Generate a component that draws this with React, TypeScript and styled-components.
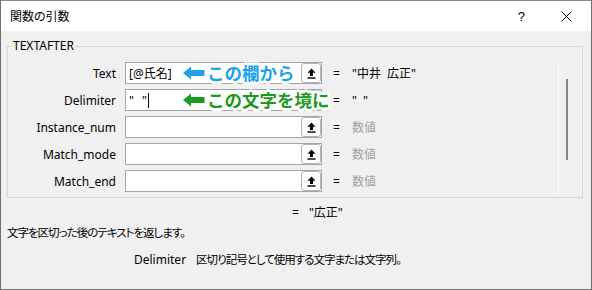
import styled, { createGlobalStyle } from "styled-components";

const GlobalStyle = createGlobalStyle`
  html, body {
    margin: 0;
    padding: 0;
    background: #f0f0f0;
  }
  body {
    font-family: "Noto Sans", "Noto Sans CJK JP", sans-serif;
    font-size: 12px;
    color: #000;
    font-feature-settings: "palt";
  }
`;

type Note = { text: string; color: string };
type Row = {
  label: string;
  value?: string;
  caret?: boolean;
  result: string;
  muted?: boolean;
  note?: Note;
};

const rows: Row[] = [
  { label: "Text", value: "[@氏名]", result: "\"中井\u2002広正\"", note: { text: "この欄から", color: "#1ea3ea" } },
  { label: "Delimiter", value: "\"\u2002\u2009\"", caret: true, result: "\"\u2002\"", note: { text: "この文字を境に", color: "#1b9a1f" } },
  { label: "Instance_num", result: "数値", muted: true },
  { label: "Match_mode", result: "数値", muted: true },
  { label: "Match_end", result: "数値", muted: true },
];

const RefIcon = () => (
  <svg width="9" height="11" viewBox="0 0 9 11">
    <path d="M4.5 0.5 L8.5 4.8 H6 V8 H3 V4.8 H0.5 Z" fill="#000" />
    <rect x="0.5" y="9.3" width="8" height="1.4" fill="#000" />
  </svg>
);

const CloseIcon = () => (
  <svg width="11" height="11" viewBox="0 0 11 11">
    <path d="M0.5 0.5 L10.5 10.5 M10.5 0.5 L0.5 10.5" stroke="#000" strokeWidth="1" />
  </svg>
);

const ArrowIcon = ({ color }: { color: string }) => (
  <svg width="26" height="18" viewBox="0 0 26 18">
    <path
      d="M2 9 L10 2.5 V6 H23.5 V12 H10 V15.5 Z"
      fill={color}
      stroke="#fff"
      strokeWidth="3"
      strokeLinejoin="round"
      paintOrder="stroke"
    />
  </svg>
);

export default function App() {
  return (
    <>
      <GlobalStyle />
      <Window>
        <TitleBar>
          <Title>関数の引数</Title>
          <TitleButtons>
            <Help>?</Help>
            <CloseIcon />
          </TitleButtons>
        </TitleBar>
        <Body>
          <Group>
            <Legend>TEXTAFTER</Legend>
            <Grid>
              {rows.map((row, i) => (
                <GridRow key={row.label}>
                  <Label>{row.label}</Label>
                  <FieldCell>
                    <Field>
                      <FieldText>
                        {row.value}
                        {row.caret ? <Caret /> : null}
                      </FieldText>
                      <RefButton>
                        <RefIcon />
                      </RefButton>
                    </Field>
                    {row.note ? (
                      <Annotation $color={row.note.color}>
                        <ArrowIcon color={row.note.color} />
                        <span>{row.note.text}</span>
                      </Annotation>
                    ) : null}
                  </FieldCell>
                  <Eq>=</Eq>
                  <Value $muted={row.muted}>{row.result}</Value>
                  {i === 0 ? (
                    <Scroll>
                      <Track />
                      <Thumb />
                    </Scroll>
                  ) : null}
                </GridRow>
              ))}
            </Grid>
          </Group>
          <Result>
            <Eq>=</Eq>
            <span>"広正"</span>
          </Result>
          <Description>文字を区切った後のテキストを返します。</Description>
          <ArgHelp>
            <ArgName>Delimiter</ArgName>
            <ArgText>区切り記号として使用する文字または文字列。</ArgText>
          </ArgHelp>
        </Body>
      </Window>
    </>
  );
}

const Window = styled.div`
  width: 592px;
  height: 290px;
  box-sizing: border-box;
  border: 1px solid #6f6f6f;
  border-top-color: #8a8a8a;
  background: #f0f0f0;
  display: flex;
  flex-direction: column;
`;

const TitleBar = styled.div`
  height: 30px;
  background: #fff;
  display: flex;
  align-items: center;
  justify-content: space-between;
  padding: 0 19px 0 9px;
`;

const Title = styled.div`
  font-size: 12px;
  color: #000;
`;

const TitleButtons = styled.div`
  display: flex;
  align-items: center;
  gap: 36px;
`;

const Help = styled.span`
  font-family: "Liberation Sans", sans-serif;
  font-size: 13px;
`;

const Body = styled.div`
  display: flex;
  flex-direction: column;
  padding: 0 0 0 6px;
`;

const Group = styled.fieldset`
  margin: 7px 0 0 0;
  padding: 0 0 5px 0;
  width: 576px;
  box-sizing: border-box;
  border: 1px solid #d6d6d6;
  min-inline-size: 0;
`;

const Legend = styled.legend`
  margin-left: 4px;
  padding: 0 1px;
  font-family: "Noto Sans", sans-serif;
  font-size: 12px;
  line-height: 16px;
  color: #000;
`;

const Grid = styled.div`
  display: grid;
  grid-template-columns: 117px 208px 19px 1fr 10px;
  row-gap: 5px;
  padding: 8px 14px 0 0;
`;

const GridRow = styled.div`
  display: contents;
`;

const Label = styled.div`
  text-align: right;
  padding-right: 9px;
  align-self: center;
  font-size: 12px;
  color: #000;
`;

const FieldCell = styled.div`
  position: relative;
  height: 22px;
`;

const Field = styled.div`
  width: 197px;
  height: 22px;
  box-sizing: border-box;
  border: 1px solid #a5a5a5;
  background: #fff;
  display: flex;
  align-items: center;
  justify-content: space-between;
  padding: 0 0 0 3px;
`;

const FieldText = styled.div`
  display: flex;
  align-items: center;
  font-size: 12px;
  white-space: pre;
`;

const Caret = styled.span`
  display: inline-block;
  width: 1px;
  height: 15px;
  background: #000;
  margin-left: 1px;
`;

const RefButton = styled.div`
  width: 20px;
  height: 20px;
  box-sizing: border-box;
  border: 1px solid #b4b4b4;
  border-radius: 3px;
  background: #fdfdfd;
  display: flex;
  align-items: center;
  justify-content: center;
`;

const Annotation = styled.div<{ $color: string }>`
  position: absolute;
  left: 56px;
  top: 50%;
  transform: translateY(-50%);
  display: flex;
  align-items: center;
  white-space: nowrap;
  font-family: "Noto Sans CJK JP", sans-serif;
  font-feature-settings: normal;
  font-weight: 700;
  font-size: 17.5px;
  line-height: 20px;
  color: ${(p) => p.$color};
  text-shadow:
    2px 0 0 #fff, -2px 0 0 #fff, 0 2px 0 #fff, 0 -2px 0 #fff,
    2px 2px 0 #fff, -2px -2px 0 #fff, 2px -2px 0 #fff, -2px 2px 0 #fff,
    3px 0 0 #fff, -3px 0 0 #fff, 0 3px 0 #fff, 0 -3px 0 #fff;
  z-index: 2;
`;

const Eq = styled.div`
  align-self: center;
  font-size: 12px;
  color: #000;
`;

const Value = styled.div<{ $muted?: boolean }>`
  align-self: center;
  font-size: 12px;
  white-space: pre;
  color: ${(p) => (p.$muted ? "#a3a3a3" : "#000")};
`;

const Scroll = styled.div`
  grid-column: 5;
  grid-row: 1 / span 5;
  display: flex;
  gap: 7px;
`;

const Track = styled.div`
  width: 1px;
  background: #fff;
  margin-bottom: -1px;
`;

const Thumb = styled.div`
  width: 2px;
  height: 81px;
  margin-top: 17px;
  background: #858585;
`;

const Result = styled.div`
  display: flex;
  gap: 10px;
  padding-left: 285px;
  margin-top: 7px;
  line-height: 16px;
`;

const Description = styled.div`
  margin-top: 4px;
  line-height: 16px;
  font-size: 11.5px;
  letter-spacing: -1px;
`;

const ArgHelp = styled.div`
  display: flex;
  align-items: baseline;
  gap: 10px;
  margin-top: 11px;
  padding-left: 127px;
  line-height: 16px;
`;

const ArgName = styled.span`
  font-family: "Noto Sans", sans-serif;
`;

const ArgText = styled.span`
  font-size: 11.5px;
  letter-spacing: -1px;
`;
